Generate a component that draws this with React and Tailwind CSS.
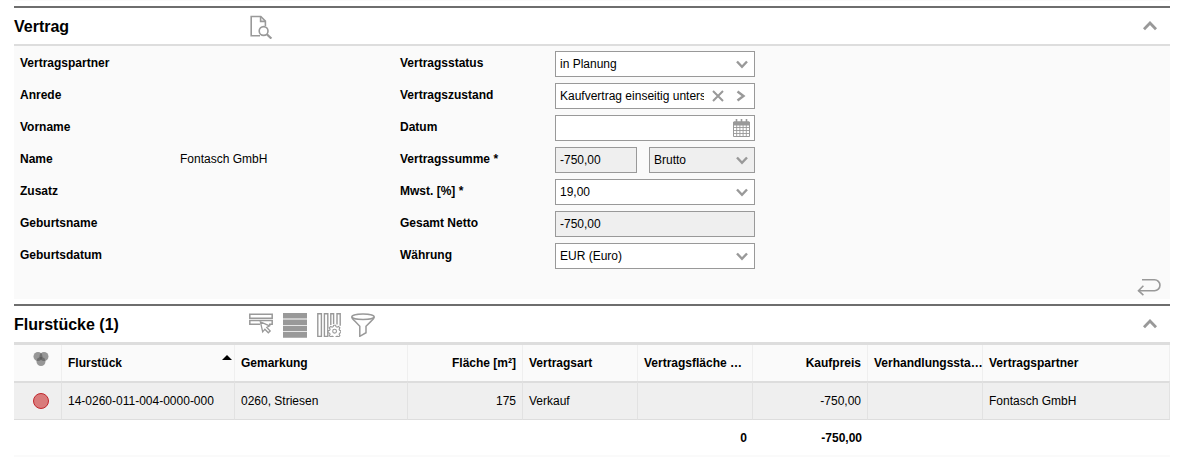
import React, { useState } from "react";

const partnerFields = [
  { label: "Vertragspartner", value: "" },
  { label: "Anrede", value: "" },
  { label: "Vorname", value: "" },
  { label: "Name", value: "Fontasch GmbH" },
  { label: "Zusatz", value: "" },
  { label: "Geburtsname", value: "" },
  { label: "Geburtsdatum", value: "" },
];

const parcels = [
  {
    id: "14-0260-011-004-0000-000",
    gemarkung: "0260, Striesen",
    flaeche: "175",
    art: "Verkauf",
    vertragsflaeche: "",
    kaufpreis: "-750,00",
    stand: "",
    partner: "Fontasch GmbH",
  },
];

// ICONS
function ChevronUp() {
  return (
    <svg width="16" height="12" viewBox="0 0 16 12" fill="none" stroke="#999" strokeWidth="2.8">
      <path d="M2 8.300 8 2l6 6.300" />
    </svg>
  );
}

function ChevronDown() {
  return (
    <svg
      className="absolute right-[7px] top-[9px] pointer-events-none"
      width="12"
      height="9"
      viewBox="0 0 12 9"
      fill="none"
      stroke="#999"
      strokeWidth="2.4"
    >
      <path d="M1 1.5 6 6.8l5-5.3" />
    </svg>
  );
}

function DocumentSearchIcon() {
  return (
    <svg width="24" height="24" viewBox="0 0 24 24" fill="none" stroke="#999" strokeWidth="1.6">
      <path d="M11 20.8H2.2V1.5h9.6l4.6 4.6v5" />
      <path d="M11.6 1.8v4.6h4.6" />
      <circle cx="14.6" cy="16" r="4.4" />
      <path d="m17.8 19.2 4.6 4.4" strokeWidth="2.2" />
    </svg>
  );
}

function SelectRowIcon() {
  return (
    <svg width="24" height="24" viewBox="0 0 24 24" fill="none" stroke="#999" strokeWidth="1.5">
      <path d="M.8 1.3h22.4v3.9H.8z" />
      <path d="M11 11.3H.8V7.4h22.4v3.9H20" />
      <path d="m11.4 8.8 2.3 10 2.2-2.6 3.4 3.6 1.9-1.8-3.4-3.6 2.8-1.6z" fill="#fff" strokeWidth="1.3" />
    </svg>
  );
}

function RowsIcon() {
  return (
    <svg width="24" height="25" viewBox="0 0 24 25" fill="#999">
      <path d="M0 0h24v5.6H0zM0 6.5h24v5.4H0zM0 12.8h24v5.4H0zM0 19.1h24v5.6H0z" />
    </svg>
  );
}

function ColumnsIcon() {
  return (
    <svg width="24" height="24" viewBox="0 0 24 24" fill="none" stroke="#999" strokeWidth="1.4">
      <path d="M.8.8h3.6v22.6H.8zM7.4.8h3.4v22.6H7.4zM13.8 12V.8h2.8V11M20 11.5V.8h3.2v12" />
      <circle cx="17.6" cy="17.8" r="6.4" fill="#fff" stroke="none" />
      <path d="m16.6 12.2 2 0 .4 1.5 1.1.5 1.4-.8 1.4 1.4-.8 1.4.5 1.1 1.2.4v2l-1.2.4-.5 1.1.8 1.4-1.4 1.4-1.4-.8-1.1.5-.4 1.2h-2l-.4-1.2-1.1-.5-1.4.8-1.4-1.4.8-1.4-.5-1.1-1.5-.4v-2l1.5-.4.5-1.1-.8-1.4 1.4-1.4 1.4.8 1.1-.5z" strokeWidth="1.1" />
      <circle cx="17.6" cy="18.2" r="1.9" strokeWidth="1.1" />
    </svg>
  );
}

function FunnelIcon() {
  return (
    <svg width="24" height="24" viewBox="0 0 24 24" fill="none" stroke="#999" strokeWidth="1.5">
      <ellipse cx="12" cy="3.8" rx="11.2" ry="2.8" />
      <path d="M.8 3.8c0 2 1.6 3 3 4.3l5 5.2v10l6.2-3.6v-6.4l5.2-5.2c1.4-1.3 3-2.300 3-4.300" />
    </svg>
  );
}

function CalendarIcon() {
  return (
    <svg width="17" height="18" viewBox="0 0 17 18" fill="none" stroke="#999">
      <path d="M.5 3h16v14.500H.5z" />
      <path d="M1 3h15v3H1z" fill="#999" />
      <path d="M3.500 0v4M8.500 0v4M13.500 0v4" strokeWidth="1.600" />
      <path d="M3.700 6v11M6.900 6v11M10.100 6v11M13.300 6v11M1 8.500h15M1 11.500h15M1 14.500h15" strokeWidth=".9" />
    </svg>
  );
}

function ReturnIcon() {
  return (
    <svg width="24" height="18" viewBox="0 0 24 18" fill="none" stroke="#999" strokeWidth="1.600">
      <path d="M5 1.800h12.500a5.400 5.400 0 0 1 0 10.900H1.500" />
      <path d="M6.400 7.800 1.500 12.700l4.900 4.500" />
    </svg>
  );
}

function StatusIcon() {
  return (
    <svg width="16" height="16" viewBox="0 0 16 16" fill="#555" fillOpacity=".6">
      <circle cx="5" cy="5.500" r="4.500" />
      <circle cx="11" cy="5.500" r="4.500" />
      <circle cx="8" cy="10.500" r="4.500" />
    </svg>
  );
}

// PANEL HEADER
function PanelHeader({ title, open, onToggle, children }) {
  return (
    <div className="flex items-center h-9 pt-[2px] pr-3">
      <h2 className="w-[235px] shrink-0 text-base font-bold">{title}</h2>
      <div className="flex flex-1 gap-[10px]">{children}</div>
      <button type="button" aria-label={title + " umschalten"} aria-expanded={open} onClick={onToggle}>
        <ChevronUp />
      </button>
    </div>
  );
}

function Field({ id, label, children }) {
  return (
    <div className="flex h-[26px]">
      <label htmlFor={id} className="w-[155px] shrink-0 leading-6 font-bold">
        {label}
      </label>
      <div className="flex w-[200px] gap-3">{children}</div>
    </div>
  );
}

function Select({ id, label, options, disabled }) {
  return (
    <div className="relative flex-1">
      <select
        id={id}
        aria-label={label}
        disabled={disabled}
        className="block w-full h-[26px] pl-1 pr-6 appearance-none border border-[#999] bg-white text-black opacity-100 disabled:bg-[#efefef]"
      >
        {options.map((o) => (
          <option key={o}>{o}</option>
        ))}
      </select>
      <ChevronDown />
    </div>
  );
}

const th = "h-9 px-[6px] truncate border-r border-[#efefef] font-bold";
const td = "h-9 px-[6px] truncate border-r border-[#e2e2e2]";

export default function App() {
  const [showContract, setShowContract] = useState(true);
  const [showParcels, setShowParcels] = useState(true);
  const [zustand, setZustand] = useState("Kaufvertrag einseitig unterschrieben");
  const [datum, setDatum] = useState("");

  return (
    <div className="pl-[14px] pr-[11px] bg-white text-black text-xs font-['Liberation_Sans',Arial,sans-serif]">
      <div className="h-px bg-[#fafafa]" />

      {/* VERTRAG */}
      <section className="mt-[5px] border-t-2 border-[#6e6e6e]">
        <PanelHeader title="Vertrag" open={showContract} onToggle={() => setShowContract(!showContract)}>
          <button type="button" aria-label="Vorschau">
            <DocumentSearchIcon />
          </button>
        </PanelHeader>

        {showContract && (
          <form className="pt-[5px] pb-[3px] pl-[6px] pr-[9px] border-t-2 border-[#ddd] bg-[#fafafa]">
            <div className="flex">
              <dl className="flex flex-col gap-[6px] w-[380px]">
                {partnerFields.map((f) => (
                  <div key={f.label} className="flex h-[26px] leading-6">
                    <dt className="w-[160px] font-bold">{f.label}</dt>
                    <dd>{f.value}</dd>
                  </div>
                ))}
              </dl>

              <div className="flex flex-col gap-[6px]">
                <Field id="status" label="Vertragsstatus">
                  <Select id="status" options={["in Planung", "Abgeschlossen"]} />
                </Field>
                <Field id="zustand" label="Vertragszustand">
                  <div className="flex flex-1 min-w-0 items-center gap-2 pr-2 border border-[#999] bg-white">
                    <input
                      id="zustand"
                      value={zustand}
                      onChange={(e) => setZustand(e.target.value)}
                      className="flex-1 min-w-0 h-6 ml-1 outline-none"
                    />
                    <div className="flex gap-3">
                      <button type="button" aria-label="Leeren" onClick={() => setZustand("")}>
                        <svg width="12" height="12" viewBox="0 0 12 12" stroke="#999" strokeWidth="2">
                          <path d="m1 1 10 10M11 1 1 11" />
                        </svg>
                      </button>
                      <button type="button" aria-label="Auswählen">
                        <svg width="10" height="12" viewBox="0 0 10 12" fill="none" stroke="#999" strokeWidth="2.400">
                          <path d="m1.500 1.500 6 4.500-6 4.500" />
                        </svg>
                      </button>
                    </div>
                  </div>
                </Field>
                <Field id="datum" label="Datum">
                  <div className="flex flex-1 min-w-0 items-center pr-1 border border-[#999] bg-white">
                    <input
                      id="datum"
                      value={datum}
                      onChange={(e) => setDatum(e.target.value)}
                      className="flex-1 min-w-0 h-6 pl-1 outline-none"
                    />
                    <button type="button" aria-label="Kalender">
                      <CalendarIcon />
                    </button>
                  </div>
                </Field>
                <Field id="summe" label="Vertragssumme *">
                  <input
                    id="summe"
                    readOnly
                    value="-750,00"
                    className="w-[82px] h-[26px] pl-1 border border-[#999] bg-[#efefef]"
                  />
                  <Select label="Brutto oder Netto" options={["Brutto", "Netto"]} disabled />
                </Field>
                <Field id="mwst" label="Mwst. [%] *">
                  <Select id="mwst" options={["19,00", "7,00"]} />
                </Field>
                <Field id="netto" label="Gesamt Netto">
                  <input
                    id="netto"
                    readOnly
                    value="-750,00"
                    className="w-full h-[26px] pl-1 border border-[#999] bg-[#efefef]"
                  />
                </Field>
                <Field id="waehrung" label="Währung">
                  <Select id="waehrung" options={["EUR (Euro)", "USD (Dollar)"]} />
                </Field>
              </div>
            </div>

            <div className="flex justify-end pt-[9px]">
              <button type="button" aria-label="Zurücksetzen">
                <ReturnIcon />
              </button>
            </div>
          </form>
        )}
      </section>

      {/* FLURSTÜCKE */}
      <section className="mt-[5px] border-t-2 border-[#6e6e6e]">
        <PanelHeader title="Flurstücke (1)" open={showParcels} onToggle={() => setShowParcels(!showParcels)}>
          <button type="button" aria-label="Zeile auswählen">
            <SelectRowIcon />
          </button>
          <button type="button" aria-label="Alle Zeilen">
            <RowsIcon />
          </button>
          <button type="button" aria-label="Spalten einstellen">
            <ColumnsIcon />
          </button>
          <button type="button" aria-label="Filter">
            <FunnelIcon />
          </button>
        </PanelHeader>

        {showParcels && (
          <div className="border-t-3 border-[#ddd]">
            <table className="w-full table-fixed border-separate border-spacing-0 text-left">
              <colgroup>
                <col className="w-[48px]" />
                <col className="w-[173px]" />
                <col className="w-[173px]" />
                <col className="w-[115px]" />
                <col className="w-[115px]" />
                <col className="w-[115px]" />
                <col className="w-[115px]" />
                <col className="w-[115px]" />
                <col />
              </colgroup>
              <thead className="bg-[#fafafa]">
                <tr>
                  <th scope="col" aria-label="Status" className="h-9 pl-[19px] pb-2 border-r border-[#efefef]">
                    <StatusIcon />
                  </th>
                  <th scope="col" aria-sort="ascending" className={th}>
                    <div className="flex justify-between">
                      Flurstück
                      <svg className="-mr-1" width="10" height="5" viewBox="0 0 10 5">
                        <path d="M5 0 10 5H0z" />
                      </svg>
                    </div>
                  </th>
                  <th scope="col" className={th}>Gemarkung</th>
                  <th scope="col" className={th + " text-right"}>Fläche [m²]</th>
                  <th scope="col" className={th}>Vertragsart</th>
                  <th scope="col" className={th + " text-right"}>Vertragsfläche [m²]</th>
                  <th scope="col" className={th + " text-right"}>Kaufpreis</th>
                  <th scope="col" className="h-9 pl-[6px] whitespace-nowrap border-r border-[#efefef] font-bold">
                    Verhandlungssta…
                  </th>
                  <th scope="col" className={th}>Vertragspartner</th>
                </tr>
              </thead>
              <tbody className="bg-[#efefef]">
                {parcels.map((p) => (
                  <tr key={p.id} className="[&>td]:border-t-2 [&>td]:border-b [&>td]:border-y-[#ddd]">
                    <td className="h-[39px] pl-[18px] border-r border-[#e2e2e2]">
                      <svg width="18" height="18" viewBox="0 0 18 18">
                        <circle cx="9" cy="9" r="7.500" fill="#d97b7b" stroke="#c1272d" />
                      </svg>
                    </td>
                    <td className={td}>{p.id}</td>
                    <td className={td}>{p.gemarkung}</td>
                    <td className={td + " text-right"}>{p.flaeche}</td>
                    <td className={td}>{p.art}</td>
                    <td className={td + " text-right"}>{p.vertragsflaeche}</td>
                    <td className={td + " text-right"}>{p.kaufpreis}</td>
                    <td className={td}>{p.stand}</td>
                    <td className={td}>{p.partner}</td>
                  </tr>
                ))}
              </tbody>
              <tfoot>
                <tr className="h-[35px] text-right font-bold">
                  <td colSpan={5} />
                  <td className="px-[6px]">0</td>
                  <td className="px-[6px]">-750,00</td>
                  <td colSpan={2} />
                </tr>
              </tfoot>
            </table>
            <div className="h-[2px] bg-[#fafafa]" />
          </div>
        )}
      </section>
    </div>
  );
}
